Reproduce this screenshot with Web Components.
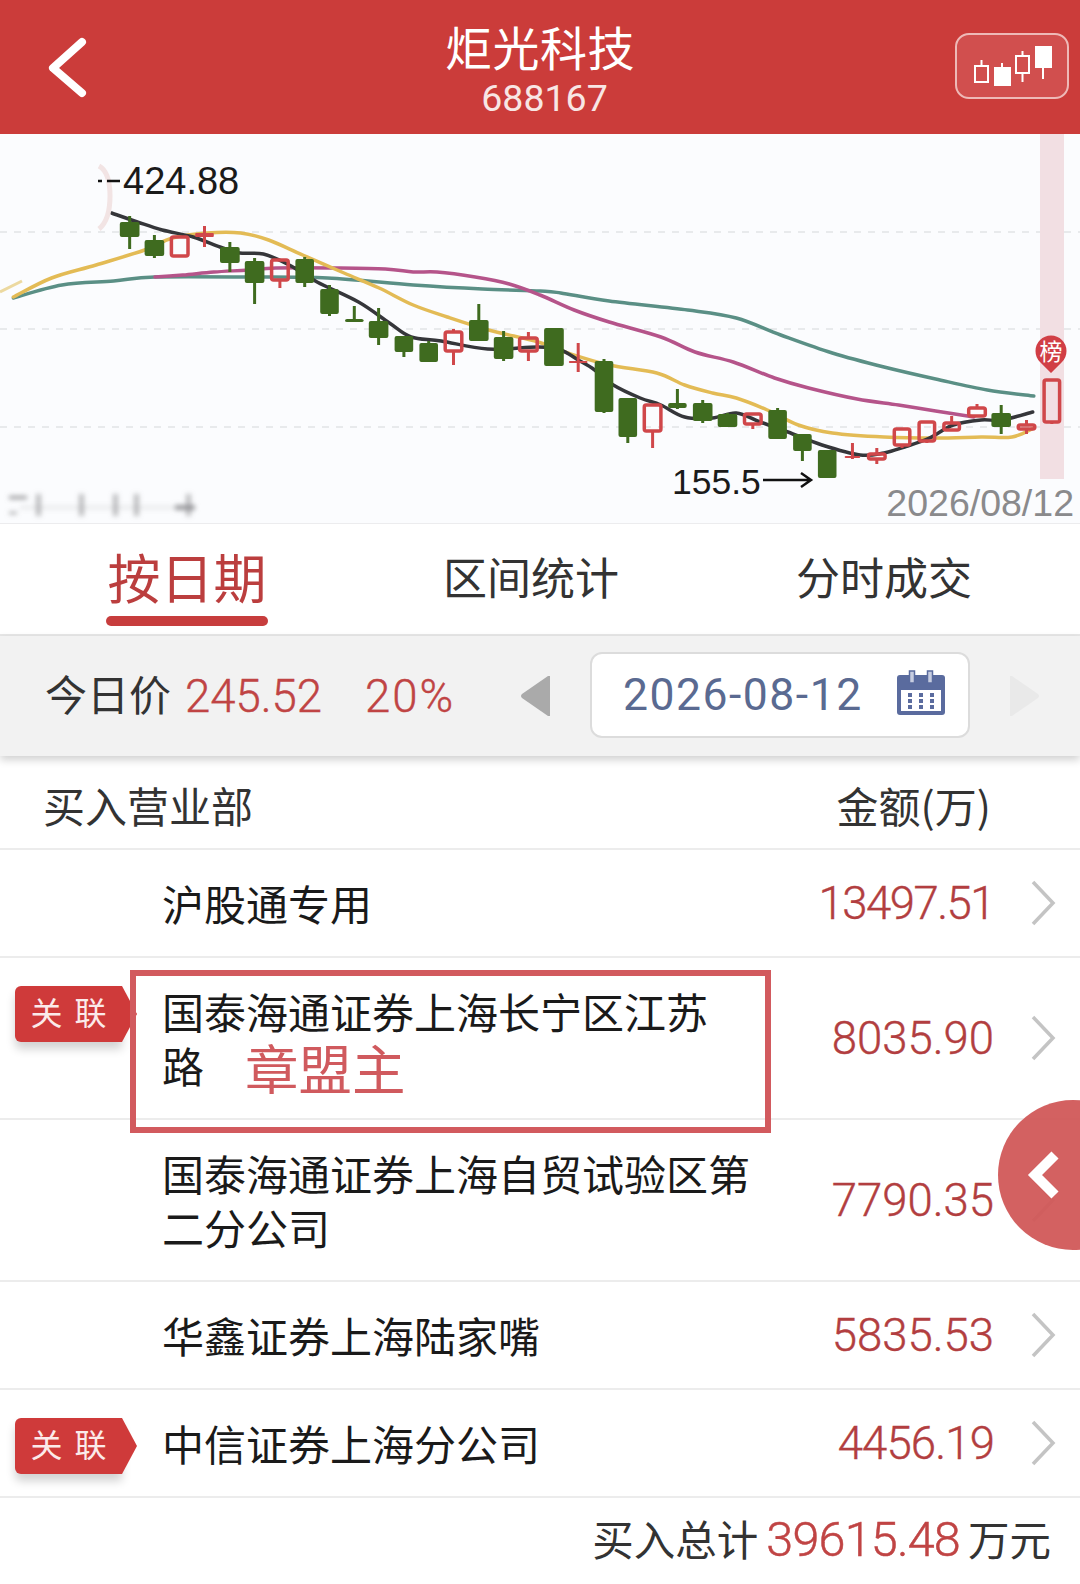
<!DOCTYPE html>
<html lang="zh">
<head>
<meta charset="utf-8">
<title>炬光科技</title>
<style>
    html, body { margin: 0; padding: 0; background: #fff; }
    body {
        width: 1080px;
        height: 1584px;
        overflow: hidden;
        position: relative;
        font-family: "Noto Sans CJK SC", "Liberation Sans", sans-serif;
    }
    .note {
        display: inline-block;
        height: 54px;
        margin-left: 41px;
        font-size: 53.500px;
        line-height: 54px;
        vertical-align: top;
        transform: translateY(2px);
        color: #d05a5e;
    }
</style>
</head>
<body>
<app-header name="炬光科技" code="688167"></app-header>
<kline-chart></kline-chart>
<tab-bar></tab-bar>
<price-bar></price-bar>
<list-head></list-head>
<dept-row amount="13497.51">沪股通专用</dept-row>
<dept-row amount="8035.90" tag tall mark>国泰海通证券上海长宁区江苏<br>路<span class="note">章盟主</span></dept-row>
<dept-row amount="7790.35" tall>国泰海通证券上海自贸试验区第二分公司</dept-row>
<dept-row amount="5835.53">华鑫证券上海陆家嘴</dept-row>
<dept-row amount="4456.19" tag>中信证券上海分公司</dept-row>
<total-bar value="39615.48"></total-bar>
<float-button></float-button>

<script>
// the reference's numerals have a narrow 1, Roboto's are all one width: take it back over the whole number
const tighten = s => `${(-(s.split('1').length - 1) * 0.13 / s.length).toFixed(3)}em`;

class AppHeader extends HTMLElement {
    constructor() {
        super();
        this.attachShadow({ mode: 'open' });
    }
    connectedCallback() {
        this.shadowRoot.innerHTML = `
            <style>
                :host {
                    display: grid;
                    grid-template-columns: 1fr auto 1fr;
                    height: 134px;
                    box-sizing: border-box;
                    align-items: center;
                    background: #cb3c3a;
                    color: #fff;
                    padding: 0 11px 0 44px;
                }
                .mid { display: flex; flex-direction: column; align-items: center; margin-left: -33px; }
                .name { font-size: 47px; line-height: 60px; margin-top: 1px; letter-spacing: 0.5px; }
                .code { font: 37.500px/42px Roboto, sans-serif; color: #f8e6e4; margin: 1px 0 0 9px; }
                .btn {
                    justify-self: end;
                    width: 114px;
                    height: 66px;
                    box-sizing: border-box;
                    border: 2px solid #eeb9b7;
                    border-radius: 14px;
                    background: #d14f4e;
                    margin-top: -2px;
                }
                svg { display: block; }
            </style>
            <svg width="48" height="64" viewBox="0 0 48 64"><path d="M38 7L9 33L38 58" fill="none" stroke="#fff" stroke-width="8" stroke-linecap="round" stroke-linejoin="round"/></svg>
            <div class="mid">
                <div class="name">${this.getAttribute('name')}</div>
                <div class="code">${this.getAttribute('code')}</div>
            </div>
            <div class="btn">
                <svg width="110" height="62" viewBox="0 0 110 62" fill="none" stroke="#fff" stroke-width="2">
                    <rect x="18" y="31" width="13" height="16"/>
                    <path d="M24.500 25V31M45 28V33M65.500 16V21M65.500 38V47M86 32V44"/>
                    <rect x="38" y="33" width="15" height="17" fill="#fff"/>
                    <rect x="59" y="21" width="13" height="17"/>
                    <rect x="79" y="12" width="15" height="20" fill="#fff"/>
                </svg>
            </div>
        `;
    }
}
customElements.define('app-header', AppHeader);

// candle data read off the chart: left, right, body top, body bottom, wick top, wick bottom, type
const CANDLES = [
    [116,135,222,237,216,249,'g'],[140,159,240,256,235,258,'g'],[165,183,236,257,236,257,'r'],[189,207,233,237,226,247,'R'],
    [213,232,247,263,242,272,'g'],[237,256,261,283,258,304,'g'],[262,280,259,281,259,288,'r'],[286,304,259,283,257,287,'g'],
    [310,328,289,314,285,316,'g'],[334,352,319,322,306,322,'g'],[357,376,321,338,308,345,'g'],[382,400,336,352,336,357,'g'],
    [406,424,343,362,341,362,'g'],[430,448,331,352,329,365,'r'],[454,473,320,341,304,341,'g'],[478,497,337,359,331,361,'g'],
    [502,521,337,352,332,361,'r'],[544,563,328,366,328,366,'g'],[568,586,361,363,343,372,'R'],[593,611,361,412,359,413,'g'],
    [616,634,398,437,398,443,'g'],[640,658,404,432,404,448,'r'],[664,682,403,408,389,409,'g'],[688,707,403,421,400,423,'g'],
    [712,731,414,427,413,427,'g'],[737,755,413,425,413,429,'r'],[761,779,410,439,408,439,'g'],[785,803,434,451,434,461,'g'],
    [809,827,450,478,450,478,'g'],[835,850,456,458,443,459,'R'],[857,875,453,460,448,464,'r'],[882,899,428,446,428,448,'r'],
    [906,923,421,442,421,443,'r'],[930,947,422,431,416,431,'r'],[954,972,407,417,404,417,'r'],[977,996,413,427,405,434,'g'],
    [1002,1020,424,430,420,434,'r'],[1027,1044,379,423,379,424,'r']
];
const LINES = [
    ['#5a8f85', [[13,298],[60,285],[110,281],[150,277],[240,277],[317,278],[400,285],[467,289],[523,291],[560,293],[607,301],[683,310],[730,318],[773,335],[823,353],[873,367],[923,379],[973,390],[1018,396]]],
    ['#b5548a', [[150,277],[177,275],[207,272],[240,270],[267,268],[320,268],[373,269],[400,272],[423,272],[460,277],[493,284],[540,295],[573,310],[607,322],[657,337],[690,352],[727,362],[767,378],[800,388],[847,399],[887,405],[923,411],[960,417]]],
    ['#e3bb55', [[13,297],[50,278],[93,265],[140,250],[167,238],[200,233],[233,233],[260,240],[293,255],[333,273],[367,288],[400,305],[433,317],[473,330],[521,342],[567,353],[607,365],[653,373],[680,385],[707,393],[730,398],[760,410],[790,425],[823,433],[873,437],[923,438],[967,437],[997,437],[1018,428]]],
    ['#35363a', [[108,213],[133,222],[157,230],[187,237],[213,247],[232,253],[255,254],[280,265],[307,282],[347,302],[377,323],[398,337],[427,341],[472,349],[521,347],[560,350],[577,360],[593,370],[611,385],[637,398],[657,405],[680,417],[707,418],[730,413],[753,422],[780,432],[813,445],[850,455],[873,453],[893,447],[917,438],[940,425],[967,420],[987,420],[1017,412]]]
];
const fx = x => +(x <= 530 ? x * 1.033 : 540 + (x - 540) * 1.033).toFixed(1);

function smooth(pts) {
    const p = pts.map(([x, y]) => [fx(x), y]);
    let d = `M${p[0][0]} ${p[0][1]}`;
    for (let i = 0; i < p.length - 1; i++) {
        const a = p[Math.max(i - 1, 0)], b = p[i], c = p[i + 1], e = p[Math.min(i + 2, p.length - 1)];
        const c1 = [b[0] + (c[0] - a[0]) / 6, b[1] + (c[1] - a[1]) / 6];
        const c2 = [c[0] - (e[0] - b[0]) / 6, c[1] - (e[1] - b[1]) / 6];
        d += `C${c1[0].toFixed(1)} ${c1[1].toFixed(1)} ${c2[0].toFixed(1)} ${c2[1].toFixed(1)} ${c[0]} ${c[1]}`;
    }
    return d;
}

class KlineChart extends HTMLElement {
    constructor() {
        super();
        this.attachShadow({ mode: 'open' });
    }
    candles() {
        return CANDLES.map(([l, r, t, b, wt, wb, k]) => {
            const x0 = fx(l), x1 = fx(r), mid = (x0 + x1) / 2;
            const col = k === 'g' ? '#3f6b1f' : '#d0474a';
            const wick = `<path d="M${mid} ${wt}V${wb}" stroke="${col}" stroke-width="3"/>`;
            if (k === 'g') return wick + `<rect x="${x0}" y="${t}" width="${x1 - x0}" height="${b - t}" rx="2" fill="${col}"/>`;
            if (k === 'R') return wick + `<rect x="${x0}" y="${t}" width="${x1 - x0}" height="${b - t}" rx="1" fill="${col}"/>`;
            const wk = `<path d="M${mid} ${wt}V${t}M${mid} ${b}V${wb}" stroke="${col}" stroke-width="3"/>`;
            return wk + `<rect x="${x0 + 1}" y="${t + 1}" width="${x1 - x0 - 2}" height="${b - t - 2}" rx="2" fill="none" stroke="${col}" stroke-width="3.500"/>`;
        }).join('');
    }
    connectedCallback() {
        const dashes = [232, 329, 427].map(y => `<path d="M0 ${y}H1080" stroke="#e2e3e6" stroke-width="1.500" stroke-dasharray="7 7"/>`).join('');
        const lines = LINES.map(([c, pts]) => `<path d="${smooth(pts)}" fill="none" stroke="${c}" stroke-width="3.500" stroke-linecap="round"/>`).join('');
        this.shadowRoot.innerHTML = `
            <style>
                :host { display: block; height: 390px; background: #fbfcfe; border-bottom: 1px solid #ececee; box-sizing: border-box; }
                svg { display: block; }
                text { font-family: "Liberation Sans", sans-serif; }
            </style>
            <svg width="1080" height="389" viewBox="0 134 1080 389">
                <defs><filter id="b" x="-10%" y="-50%" width="120%" height="200%"><feGaussianBlur stdDeviation="2.400"/></filter></defs>
                ${dashes}
                <rect x="1040" y="134" width="24" height="345" fill="#f2dfe3"/>
                <path d="M0 292L22 281" stroke="#ecd9a0" stroke-width="3" fill="none"/>
                ${lines}
                ${this.candles()}
                <path d="M99 166Q110 172 110 196Q110 220 99 229" fill="none" stroke="#f2e4e4" stroke-width="5"/>
                <path d="M98 181H102M107 181H120" stroke="#111" stroke-width="2.500"/>
                <text x="123" y="194" font-size="38" fill="#1a1a1a">424.88</text>
                <text x="672" y="494" font-size="35.500" fill="#1a1a1a">155.5</text>
                <path d="M763 480H811M801 473L811 480L801 487" fill="none" stroke="#111" stroke-width="2.500"/>
                <text x="1074" y="516" font-size="37.500" fill="#8a8a8c" text-anchor="end">2026/08/12</text>
                <path d="M1051 373L1040 362A15.500 15.500 0 1 1 1062 362Z" fill="#d13e45"/>
                <text x="1051" y="360" font-size="23" fill="#fff" text-anchor="middle" style="font-family:'Noto Sans CJK SC',sans-serif">榜</text>
                <g filter="url(#b)" fill="#8f8f92">
                    <rect x="9" y="496" width="18" height="3"/><rect x="9" y="512" width="8" height="2"/>
                    <rect x="36" y="494" width="5" height="22" opacity=".6"/><rect x="79" y="494" width="5" height="22" opacity=".6"/>
                    <rect x="113" y="494" width="5" height="22" opacity=".6"/><rect x="134" y="494" width="5" height="22" opacity=".6"/>
                    <rect x="186" y="494" width="5" height="22" opacity=".6"/>
                    <rect x="20" y="506" width="174" height="3" opacity=".2"/><rect x="175" y="505" width="20" height="5" opacity=".9"/>
                </g>
            </svg>
        `;
    }
}
customElements.define('kline-chart', KlineChart);

class TabBar extends HTMLElement {
    constructor() {
        super();
        this.attachShadow({ mode: 'open' });
    }
    connectedCallback() {
        this.shadowRoot.innerHTML = `
            <style>
                :host {
                    display: grid;
                    grid-template-columns: 374px 314px 392px;
                    height: 112px;
                    box-sizing: border-box;
                    background: #fff;
                    border-bottom: 2px solid #e7e7e7;
                    font-size: 44px;
                    color: #333;
                }
                div { display: flex; align-items: center; justify-content: center; position: relative; padding-bottom: 6px; }
                .on { color: #bb3e3e; font-size: 53px; }
                .on::after {
                    content: "";
                    position: absolute;
                    left: 106px;
                    width: 162px;
                    bottom: 8px;
                    height: 10px;
                    border-radius: 5px;
                    background: #c73d3d;
                }
            </style>
            <div class="on">按日期</div>
            <div>区间统计</div>
            <div>分时成交</div>
        `;
    }
}
customElements.define('tab-bar', TabBar);

class PriceBar extends HTMLElement {
    constructor() {
        super();
        this.attachShadow({ mode: 'open' });
    }
    connectedCallback() {
        this.shadowRoot.innerHTML = `
            <style>
                :host {
                    display: flex;
                    align-items: center;
                    position: relative;
                    height: 120px;
                    box-sizing: border-box;
                    background: #f2f2f2;
                    box-shadow: 0 4px 8px rgba(0,0,0,.18);
                    padding: 0 40px 0 45px;
                    color: #333;
                    font-size: 42px;
                }
                .lbl { margin-bottom: 7px; }
                .red { font: 300 45.500px Roboto, sans-serif; color: #c04444; -webkit-text-stroke: 0.4px #c04444; }
                .price { margin-left: 14px; }
                .pct { margin-left: 43px; letter-spacing: 2px; }
                .left { margin-left: auto; }
                .box {
                    width: 380px;
                    height: 86px;
                    margin: 0 40px 2px 38px;
                    box-sizing: border-box;
                    display: flex;
                    align-items: center;
                    justify-content: space-between;
                    padding: 0 23px 0 31px;
                    background: #fff;
                    border: 2px solid #dcdcdc;
                    border-radius: 12px;
                    font: 44.500px Roboto, sans-serif;
                    letter-spacing: 1.500px;
                    color: #5a6a91;
                }
                svg { display: block; }
                .cal { margin-bottom: 5px; }
            </style>
            <span class="lbl">今日价</span>
            <span class="red price">245.52</span>
            <span class="red pct">20%</span>
            <svg class="left" width="32" height="42" viewBox="0 0 32 42"><path d="M30 1V41H28L2 23Q0 21 2 19L28 1Z" fill="#aaaaaa"/></svg>
            <div class="box">
                <span>2026-08-12</span>
                <svg class="cal" width="48" height="45" viewBox="0 0 48 45">
                    <rect x="0" y="5" width="48" height="40" rx="3" fill="#5a6b9e"/>
                    <rect x="4" y="20" width="40" height="21" fill="#fff"/>
                    <path d="M12.500 1V13H17.500V1ZM30.500 1V13H35.500V1Z" fill="#c7cde0" stroke="#5a6b9e" stroke-width="1.500"/>
                    <g fill="#5a6b9e">
                        <rect x="11" y="23" width="4" height="4"/><rect x="22" y="23" width="4" height="4"/><rect x="33" y="23" width="4" height="4"/>
                        <rect x="11" y="29" width="4" height="4"/><rect x="22" y="29" width="4" height="4"/><rect x="33" y="29" width="4" height="4"/>
                        <rect x="11" y="35" width="4" height="4"/><rect x="22" y="35" width="4" height="4"/><rect x="33" y="35" width="4" height="4"/>
                    </g>
                </svg>
            </div>
            <svg width="30" height="42" viewBox="0 0 30 42"><path d="M0 1V41H2L28 23Q30 21 28 19L2 1Z" fill="#e9e9e9"/></svg>
        `;
    }
}
customElements.define('price-bar', PriceBar);

class ListHead extends HTMLElement {
    constructor() {
        super();
        this.attachShadow({ mode: 'open' });
    }
    connectedCallback() {
        this.shadowRoot.innerHTML = `
            <style>
                :host {
                    display: flex;
                    align-items: center;
                    justify-content: space-between;
                    height: 84px;
                    margin-top: 10px;
                    box-sizing: border-box;
                    padding: 0 89px 6px 43px;
                    font-size: 42px;
                    color: #333;
                    border-bottom: 2px solid #ececec;
                }
            </style>
            <span>买入营业部</span>
            <span>金额(万)</span>
        `;
    }
}
customElements.define('list-head', ListHead);

class DeptRow extends HTMLElement {
    constructor() {
        super();
        this.attachShadow({ mode: 'open' });
    }
    connectedCallback() {
        const amount = this.getAttribute('amount');
        const tag = this.hasAttribute('tag') ? `<div class="tag">关<i></i>联</div>` : '';
        const mark = this.hasAttribute('mark') ? `<div class="mark"></div>` : '';
        this.shadowRoot.innerHTML = `
            <style>
                :host {
                    display: flex;
                    align-items: center;
                    position: relative;
                    height: 108px;
                    box-sizing: border-box;
                    padding: 0 24px 0 162px;
                    border-bottom: 2px solid #ececec;
                    font-size: 42px;
                    line-height: 54px;
                    color: #1a1a1a;
                }
                :host([tall]) { height: 162px; }
                .name { width: 600px; }
                .amt {
                    margin-left: auto;
                    font: 300 45.500px Roboto, sans-serif;
                    color: #b23e40;
                    -webkit-text-stroke: 0.4px #b23e40;
                }
                svg { display: block; margin-left: 36px; }
                .tag {
                    position: absolute;
                    left: 15px;
                    top: 28px;
                    width: 107px;
                    height: 56px;
                    padding-bottom: 7px;
                    box-sizing: border-box;
                    display: flex;
                    align-items: center;
                    justify-content: center;
                    background: #cf3a3a;
                    border-radius: 6px 0 0 6px;
                    color: #fbeaea;
                    font-size: 32px;
                    line-height: 1;
                    box-shadow: 0 7px 10px rgba(0,0,0,.18);
                }
                .tag i { width: 12px; }
                .tag::after {
                    content: "";
                    position: absolute;
                    left: 107px;
                    top: 0;
                    width: 15px;
                    height: 56px;
                    background: #cf3a3a;
                    clip-path: polygon(0 0, 100% 50%, 0 100%);
                }
                .mark {
                    position: absolute;
                    left: 130px;
                    top: 12px;
                    width: 641px;
                    height: 163px;
                    box-sizing: border-box;
                    border: 6px solid #d25a5e;
                }
            </style>
            <div class="name"><slot></slot></div>
            <span class="amt" style="letter-spacing:${tighten(amount)}">${amount}</span>
            <svg width="26" height="46" viewBox="0 0 26 46"><path d="M3 2L23 23L3 44" fill="none" stroke="#c4c4c4" stroke-width="3.500"/></svg>
            ${tag}${mark}
        `;
    }
}
customElements.define('dept-row', DeptRow);

class TotalBar extends HTMLElement {
    constructor() {
        super();
        this.attachShadow({ mode: 'open' });
    }
    connectedCallback() {
        const value = this.getAttribute('value');
        this.shadowRoot.innerHTML = `
            <style>
                :host {
                    display: flex;
                    align-items: center;
                    justify-content: flex-end;
                    height: 87px;
                    box-sizing: border-box;
                    padding: 0 29px 0 0;
                    font-size: 41.500px;
                    color: #333;
                }
                span { margin-bottom: 8px; }
                b {
                    font: 300 48.500px Roboto, sans-serif;
                    color: #c04444;
                    -webkit-text-stroke: 0.5px #c04444;
                    margin: 0 8px 4px;
                }
            </style>
            <span>买入总计</span><b style="letter-spacing:${tighten(value)}">${value}</b><span>万元</span>
        `;
    }
}
customElements.define('total-bar', TotalBar);

class FloatButton extends HTMLElement {
    constructor() {
        super();
        this.attachShadow({ mode: 'open' });
    }
    connectedCallback() {
        this.shadowRoot.innerHTML = `
            <style>
                :host {
                    position: absolute;
                    left: 998px;
                    top: 1100px;
                    width: 82px;
                    height: 150px;
                    overflow: hidden;
                }
                div { width: 150px; height: 150px; border-radius: 50%; background: rgba(209,88,88,.95); }
                svg { position: absolute; left: 26px; top: 48px; }
            </style>
            <div></div>
            <svg width="40" height="54" viewBox="0 0 40 54"><path d="M31 7L11 27L31 47" fill="none" stroke="#fff" stroke-width="10"/></svg>
        `;
    }
}
customElements.define('float-button', FloatButton);
</script>
</body>
</html>
